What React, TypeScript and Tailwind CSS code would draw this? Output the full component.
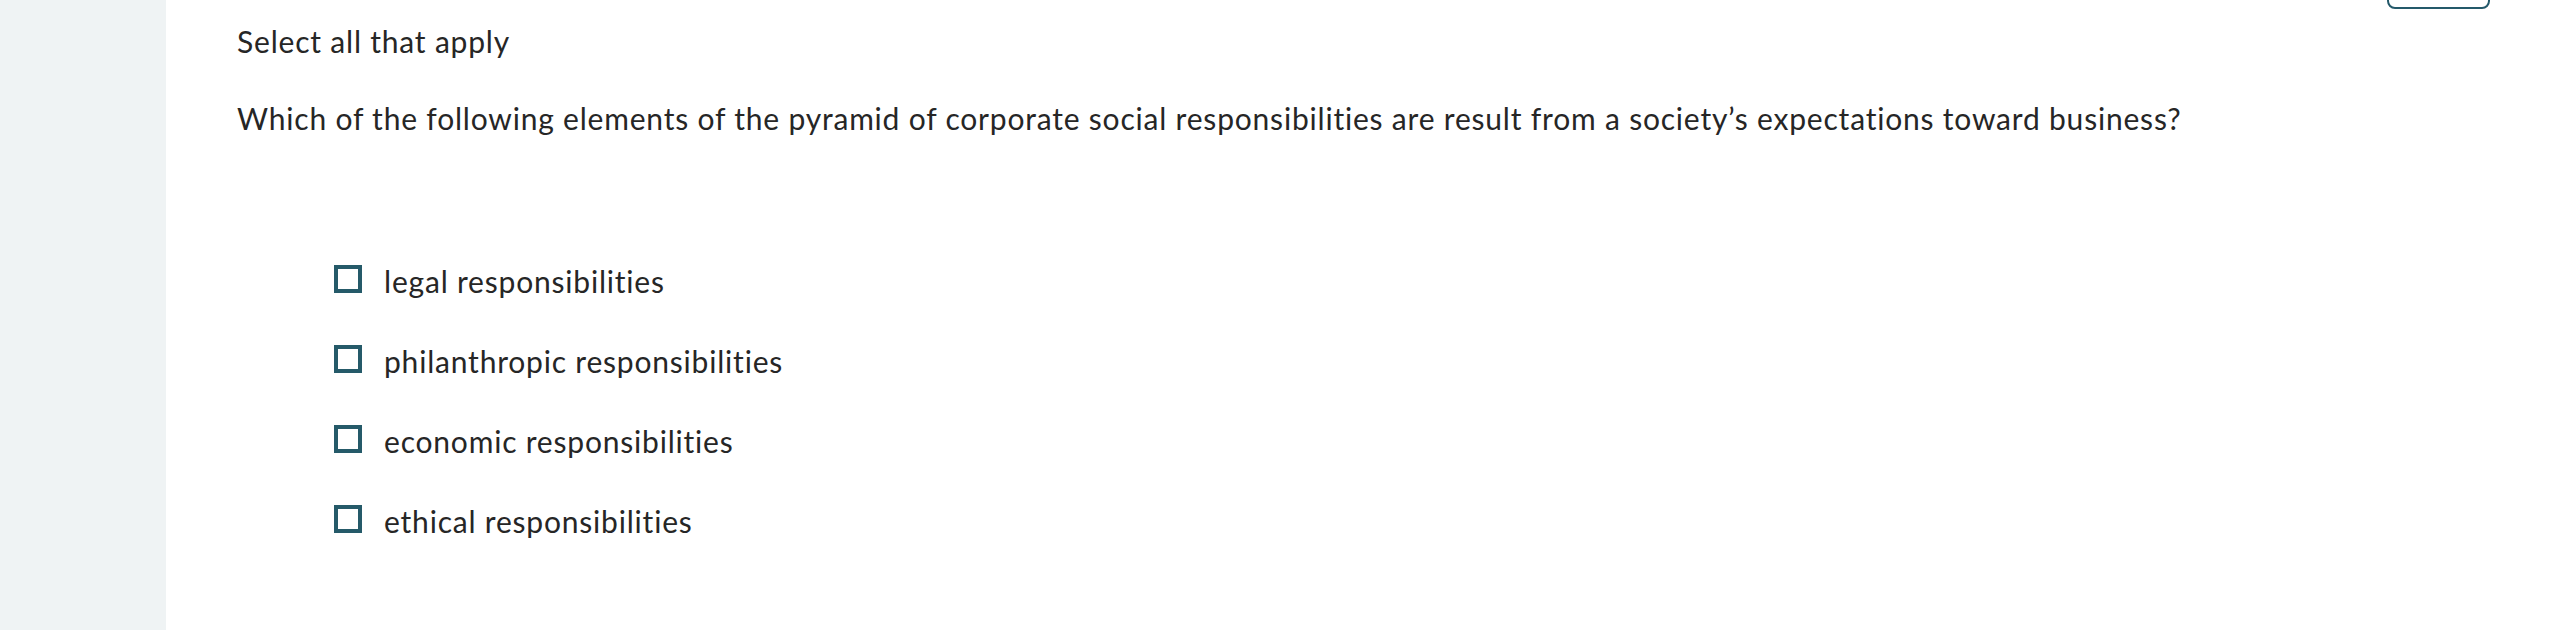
import React from "react";

const options = [
  "legal responsibilities",
  "philanthropic responsibilities",
  "economic responsibilities",
  "ethical responsibilities",
];

export default function App() {
  return (
    <div
      className="flex h-[630px] w-full overflow-hidden bg-white text-[#262626]"
      style={{ fontFamily: "Lato, 'Open Sans', sans-serif", fontVariantLigatures: "none" }}
    >
      <aside className="w-[166px] shrink-0 bg-[#eff3f4]" />
      <main className="flex min-w-0 flex-1 flex-col">
        <div className="flex h-0 justify-end pr-[71px]">
          <div className="-mt-[40px] h-[49px] w-[103px] rounded-[8px] border-2 border-[#24596a] bg-white" />
        </div>
        <div className="pl-[71px] tracking-[0.8px]">
          <p className="mt-[22px] text-[30px] leading-[38px]">Select all that apply</p>
          <p className="mt-[39px] text-[30px] leading-[38px]">
            Which of the following elements of the pyramid of corporate social responsibilities are result from a society’s expectations toward business?
          </p>
          <ul className="mt-[128px] flex flex-col gap-[52px] pl-[97px]">
            {options.map((o) => (
              <li key={o} className="flex h-[28px] items-start gap-[22px]">
                <span className="h-[28px] w-[28px] shrink-0 border-4 border-[#255a69] bg-white" />
                <span className="-mt-[3px] text-[30px] leading-[38px]">{o}</span>
              </li>
            ))}
          </ul>
        </div>
      </main>
    </div>
  );
}
